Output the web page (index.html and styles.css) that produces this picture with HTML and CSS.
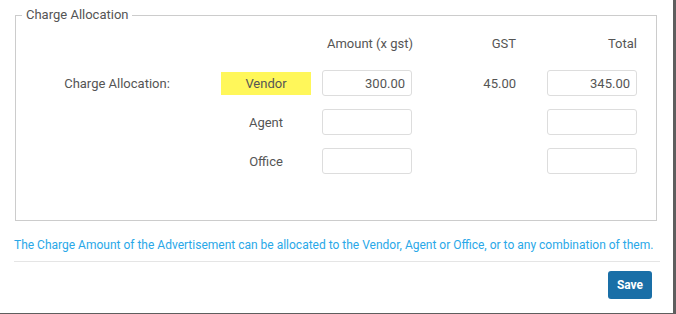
FILE: index.html
```html
<!DOCTYPE html>
<html lang="en">
<head>
<meta charset="UTF-8">
<meta name="viewport" content="width=device-width, initial-scale=1.0">
<title>Charge Allocation</title>
<link rel="stylesheet" href="styles.css">
</head>
<body>
<div class="modal">
    <fieldset class="allocation">
        <legend>Charge Allocation</legend>
        <div class="alloc-grid">
            <div></div>
            <div></div>
            <div class="head amount-head">Amount (x gst)</div>
            <div class="head gst">GST</div>
            <div class="head total">Total</div>

            <div class="row-label">Charge Allocation:</div>
            <div class="party vendor">Vendor</div>
            <input type="text" class="amount" value="300.00">
            <div class="gst">45.00</div>
            <input type="text" class="amount" value="345.00">

            <div></div>
            <div class="party">Agent</div>
            <input type="text" class="amount" value="">
            <div class="gst"></div>
            <input type="text" class="amount" value="">

            <div></div>
            <div class="party">Office</div>
            <input type="text" class="amount" value="">
            <div class="gst"></div>
            <input type="text" class="amount" value="">
        </div>
    </fieldset>

    <p class="help">The Charge Amount of the Advertisement can be allocated to the Vendor, Agent or Office, or to any combination of them.</p>

    <div class="footer">
        <button class="save-btn">Save</button>
    </div>
</div>
</body>
</html>
```

FILE: styles.css
```css
body {
    margin: 0;
    padding: 0;
    font-family: Roboto, "Liberation Sans", sans-serif;
    color: #555;
    background-color: #fff;
}
.modal {
    width: 673px;
    height: 313px;
    border-right: 3px solid #5e5e5e;
    border-bottom: 1px solid #5e5e5e;
    box-sizing: content-box;
    overflow: hidden;
}
.allocation {
    margin: 7px 16px 0 15px;
    padding: 0 0 45px 0;
    border: 1px solid #ccc;
    height: 167px;
}
.allocation legend {
    margin-left: 6px;
    padding: 0 3px 0 4px;
    font-size: 13px;
    line-height: 16px;
    color: #555;
}
.alloc-grid {
    display: grid;
    grid-template-columns: 194px 90px 90px 113px 90px;
    column-gap: 11px;
    row-gap: 13px;
    align-items: center;
    font-size: 13px;
    margin-top: 13px;
}
.head {
    line-height: 16px;
    margin-bottom: 5px;
    text-align: center;
}
.head.amount-head {
    text-align: right;
    margin-right: -1px;
}
.head.total {
    text-align: right;
}
.gst {
    text-align: right;
    padding-right: 20px;
}
.row-label {
    text-align: center;
    padding-left: 8px;
}
.party {
    text-align: center;
    line-height: 23px;
}
.vendor {
    background-color: #fff75a;
    color: #555;
}
.amount {
    width: 90px;
    height: 26px;
    box-sizing: border-box;
    border: 1px solid #ddd;
    border-radius: 3px;
    padding: 0 6px;
    font-family: inherit;
    font-size: 13px;
    color: #555;
    text-align: right;
}
.help {
    margin: 16px 0 0 14px;
    font-size: 12px;
    line-height: 16px;
    color: #29a8e8;
}
.footer {
    margin: 8px 13px 0 14px;
    padding-top: 9px;
    border-top: 1px solid #e5e5e5;
    text-align: right;
}
.save-btn {
    width: 44px;
    height: 28px;
    border: none;
    border-radius: 3px;
    background-color: #1a6fa7;
    color: #fff;
    font-family: inherit;
    font-size: 12px;
    font-weight: bold;
    margin-right: 8px;
    padding: 0;
    cursor: pointer;
}
```
